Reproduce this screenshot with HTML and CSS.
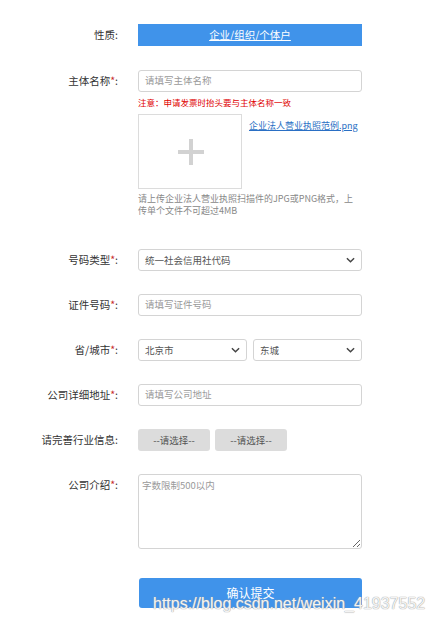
FILE: index.html
```html
<!DOCTYPE html>
<html lang="zh-CN">
<head>
<meta charset="utf-8">
<link rel="stylesheet" href="styles.css">
</head>
<body>
<div class="form">
  <div class="row r1">
    <div class="label">性质:</div>
    <div class="ctrl"><div class="type-btn"><span>企业/组织/个体户</span></div></div>
  </div>
  <div class="row r2">
    <div class="label">主体名称<i>*</i>:</div>
    <div class="ctrl">
      <div class="input ph">请填写主体名称</div>
      <div class="note">注意：申请发票时抬头要与主体名称一致</div>
      <div class="upload-line">
        <div class="upload"><span class="plus-h"></span><span class="plus-v"></span></div>
        <a class="sample">企业法人营业执照范例.png</a>
      </div>
      <div class="help">请上传企业法人营业执照扫描件的JPG或PNG格式，上传单个文件不可超过4MB</div>
    </div>
  </div>
  <div class="row">
    <div class="label">号码类型<i>*</i>:</div>
    <div class="ctrl"><div class="input select">统一社会信用社代码<svg viewBox="0 0 10 6"><path d="M1 1 L5 5 L9 1" fill="none" stroke="#444" stroke-width="1.6"/></svg></div></div>
  </div>
  <div class="row">
    <div class="label">证件号码<i>*</i>:</div>
    <div class="ctrl"><div class="input ph">请填写证件号码</div></div>
  </div>
  <div class="row">
    <div class="label">省/城市<i>*</i>:</div>
    <div class="ctrl pair">
      <div class="input select">北京市<svg viewBox="0 0 10 6"><path d="M1 1 L5 5 L9 1" fill="none" stroke="#444" stroke-width="1.6"/></svg></div>
      <div class="input select">东城<svg viewBox="0 0 10 6"><path d="M1 1 L5 5 L9 1" fill="none" stroke="#444" stroke-width="1.6"/></svg></div>
    </div>
  </div>
  <div class="row">
    <div class="label">公司详细地址<i>*</i>:</div>
    <div class="ctrl"><div class="input ph">请填写公司地址</div></div>
  </div>
  <div class="row">
    <div class="label">请完善行业信息:</div>
    <div class="ctrl chips">
      <div class="chip">--请选择--</div>
      <div class="chip">--请选择--</div>
    </div>
  </div>
  <div class="row r8">
    <div class="label">公司介绍<i>*</i>:</div>
    <div class="ctrl"><textarea class="area" placeholder="字数限制500以内"></textarea></div>
  </div>
  <div class="row">
    <div class="label"></div>
    <div class="ctrl"><div class="submit">确认提交</div></div>
  </div>
</div>
<div class="watermark">https://blog.csdn.net/weixin_41937552</div>
</body>
</html>
```
FILE: styles.css
```css
html, body {
  margin: 0;
  padding: 0;
  background: #fff;
}
body {
  font-family: "Noto Sans CJK SC", "Noto Sans", sans-serif;
  color: #333;
  position: relative;
  width: 435px;
  height: 626px;
  overflow: hidden;
}
.form {
  padding-top: 24px;
  display: flex;
  flex-direction: column;
}
.row {
  display: grid;
  grid-template-columns: 118px 224px;
  column-gap: 20px;
  align-items: start;
  margin-bottom: 23px;
}
.r1 { margin-bottom: 24px; }
.r2 { margin-bottom: 32px; }
.r8 { margin-bottom: 29px; }
.label {
  text-align: right;
  font-size: 10.5px;
  line-height: 21px;
  color: #333;
  white-space: nowrap;
}
.label i {
  font-style: normal;
  color: #c9302c;
}
.type-btn {
  height: 22px;
  background: #4093ea;
  color: #fff;
  font-size: 10.5px;
  line-height: 22px;
  text-align: center;
}
.type-btn span {
  text-decoration: underline;
}
.input {
  box-sizing: border-box;
  height: 22px;
  border: 1px solid #d4d4d4;
  border-radius: 3px;
  padding: 0 6px;
  font-size: 9.5px;
  line-height: 19px;
  color: #555;
  background: #fff;
  white-space: nowrap;
}
.input.ph { color: #9a9a9a; }
.select {
  display: flex;
  align-items: center;
  justify-content: space-between;
  padding-right: 6px;
}
.select svg {
  width: 9px;
  height: 6px;
}
.pair {
  display: grid;
  grid-template-columns: 1fr 1fr;
  column-gap: 6px;
}
.note {
  margin-top: 4px;
  font-size: 8.5px;
  line-height: 12px;
  color: #e00000;
  white-space: nowrap;
}
.upload-line {
  margin-top: 6px;
  display: flex;
  align-items: flex-start;
  gap: 7px;
}
.upload {
  box-sizing: border-box;
  width: 104px;
  height: 75px;
  border: 1px solid #dcdcdc;
  position: relative;
  flex: none;
}
.plus-h, .plus-v {
  position: absolute;
  background: #d2d2d2;
}
.plus-h {
  width: 26px;
  height: 4px;
  left: 39px;
  top: 35px;
}
.plus-v {
  width: 4px;
  height: 26px;
  left: 50px;
  top: 24px;
}
.sample {
  margin-top: 6px;
  font-size: 9px;
  line-height: 12px;
  color: #2a6fc4;
  text-decoration: underline;
  white-space: nowrap;
}
.help {
  margin-top: 4px;
  font-size: 9px;
  line-height: 12px;
  color: #888;
}
.chips {
  display: flex;
  gap: 5px;
}
.chip {
  width: 72px;
  height: 22px;
  background: #dcdcdc;
  border-radius: 3px;
  font-size: 9.5px;
  line-height: 22px;
  text-align: center;
  color: #555;
}
.area {
  display: block;
  box-sizing: border-box;
  width: 224px;
  height: 75px;
  margin: 0;
  border: 1px solid #d4d4d4;
  border-radius: 3px;
  padding: 4px 3px;
  font-family: "Noto Sans CJK SC", "Noto Sans", sans-serif;
  font-size: 9.5px;
  line-height: 13px;
  resize: both;
  outline: none;
}
.area::placeholder { color: #9a9a9a; }
.submit {
  height: 30px;
  margin-left: 1px;
  background: #4093ea;
  border-radius: 3px;
  color: #fff;
  font-size: 12px;
  line-height: 29px;
  text-align: center;
}
.watermark {
  position: absolute;
  left: 153px;
  top: 595px;
  font-family: "Liberation Sans", Arial, sans-serif;
  font-size: 16px;
  color: rgba(255, 255, 255, 0.9);
  text-shadow: 0 0 1px #a0a0a0, 0 0 1px #a0a0a0;
  white-space: nowrap;
}
```
